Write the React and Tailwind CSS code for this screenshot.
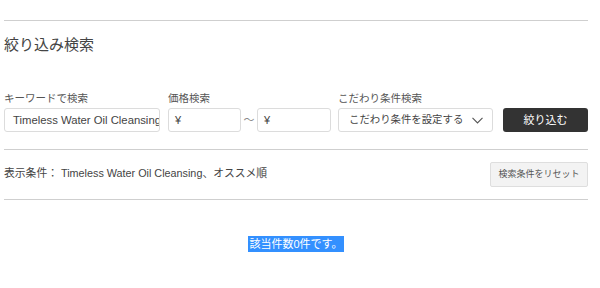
const font = { fontFamily: '"Liberation Sans", "Noto Sans CJK JP", sans-serif' };

const ChevronDown = () => (
  <svg width="11" height="7" viewBox="0 0 11 7" fill="none" className="shrink-0">
    <path d="M0.5 0.8 L5.5 6 L10.5 0.8" stroke="#555" strokeWidth="1.1" />
  </svg>
);

export default function App() {
  return (
    <div className="w-[600px] h-[288px] bg-white text-[#333] overflow-hidden" style={font}>
      <div className="ml-[4px] w-[584px] pt-[20px]">
        {/* Header */}
        <div className="border-t border-[#cfcfcf]" />
        <h2 className="mt-[13px] text-[15px] leading-[22px] text-[#444]">絞り込み検索</h2>

        {/* Filter row */}
        <div className="mt-[35px] flex items-end">
          <div className="w-[156px]">
            <div className="text-[10.5px] leading-[14px] text-[#555]">キーワードで検索</div>
            <div className="mt-[3px] h-[24px] border border-[#dcdcdc] rounded-[3px] pl-[8px] flex items-center overflow-hidden whitespace-nowrap text-[11.3px] text-[#444]">
              Timeless Water Oil Cleansing
            </div>
          </div>

          <div className="ml-[8px] w-[163px]">
            <div className="text-[10.5px] leading-[14px] text-[#555]">価格検索</div>
            <div className="mt-[3px] flex items-center">
              <div className="w-[73px] h-[24px] border border-[#dcdcdc] rounded-[3px] pl-[6px] flex items-center text-[11px] text-[#444]">¥</div>
              <span className="w-[16px] text-center text-[11px] text-[#888]">～</span>
              <div className="w-[74px] h-[24px] border border-[#dcdcdc] rounded-[3px] pl-[6px] flex items-center text-[11px] text-[#444]">¥</div>
            </div>
          </div>

          <div className="ml-[7px] w-[155px]">
            <div className="text-[10.5px] leading-[14px] text-[#555]">こだわり条件検索</div>
            <div className="mt-[3px] h-[24px] border border-[#dcdcdc] rounded-[3px] pl-[10px] pr-[9px] flex items-center justify-between text-[10.4px] text-[#444]">
              <span>こだわり条件を設定する</span>
              <ChevronDown />
            </div>
          </div>

          <button className="ml-[10px] w-[85px] h-[24px] bg-[#333] rounded-[3px] text-white text-[11px] flex items-center justify-center">
            絞り込む
          </button>
        </div>

        {/* Conditions */}
        <div className="mt-[17px] border-t border-[#cfcfcf]" />
        <div className="h-[49px] flex items-center justify-between">
          <div className="text-[10.8px] text-[#444] -mt-[3px]">
            表示条件： Timeless Water Oil Cleansing、オススメ順
          </div>
          <button className="w-[98px] h-[25px] bg-[#f3f3f3] border border-[#dedede] rounded-[2px] text-[9px] text-[#555] flex items-center justify-center">
            検索条件をリセット
          </button>
        </div>
        <div className="border-t border-[#cfcfcf]" />

        {/* Result */}
        <div className="mt-[36px] flex justify-center">
          <span className="bg-[#3390ff] text-white text-[11px] leading-[16px] px-[1px]">該当件数0件です。</span>
        </div>
      </div>
    </div>
  );
}
